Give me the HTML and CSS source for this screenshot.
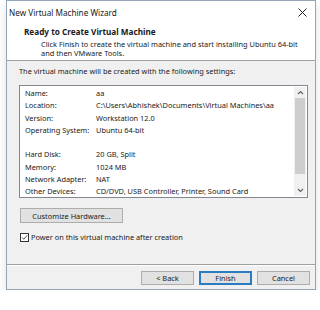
FILE: index.html
```
<!DOCTYPE html>
<html lang="en">
<head>
    <meta charset="UTF-8">
    <title>New Virtual Machine Wizard</title>
    <link rel="stylesheet" href="styles.css">
</head>
<body>
    <div class="window">
        <div class="titlebar">
            <span class="title">New Virtual Machine Wizard</span>
            <svg class="close" width="9" height="9" viewBox="0 0 9 9">
                <path d="M0.5 0.5 L8.5 8.5 M8.5 0.5 L0.5 8.5" stroke="#222" stroke-width="1" fill="none"/>
            </svg>
        </div>

        <!-- Wizard header -->
        <div class="header">
            <div class="header-title">Ready to Create Virtual Machine</div>
            <div class="header-desc">Click Finish to create the virtual machine and start installing Ubuntu 64-bit<br>and then VMware Tools.</div>
        </div>

        <div class="content">
            <p class="intro">The virtual machine will be created with the following settings:</p>
            <div class="listbox">
                <div class="rows">
                    <div class="row"><span class="label">Name:</span><span>aa</span></div>
                    <div class="row"><span class="label">Location:</span><span>C:\Users\Abhishek\Documents\Virtual Machines\aa</span></div>
                    <div class="row"><span class="label">Version:</span><span>Workstation 12.0</span></div>
                    <div class="row"><span class="label">Operating System:</span><span>Ubuntu 64-bit</span></div>
                    <div class="row"></div>
                    <div class="row"><span class="label">Hard Disk:</span><span>20 GB, Split</span></div>
                    <div class="row"><span class="label">Memory:</span><span>1024 MB</span></div>
                    <div class="row"><span class="label">Network Adapter:</span><span>NAT</span></div>
                    <div class="row"><span class="label">Other Devices:</span><span>CD/DVD, USB Controller, Printer, Sound Card</span></div>
                </div>
                <div class="scrollbar">
                    <svg class="arrow" width="7" height="5" viewBox="0 0 7 5"><path d="M1 4 L3.5 1.5 L6 4" stroke="#606060" stroke-width="1.1" fill="none"/></svg>
                    <div class="thumb"></div>
                    <div class="track"></div>
                    <svg class="arrow" width="7" height="5" viewBox="0 0 7 5"><path d="M1 1 L3.5 3.5 L6 1" stroke="#606060" stroke-width="1.1" fill="none"/></svg>
                </div>
            </div>
            <button type="button" class="button customize">Customize Hardware...</button>
            <label class="check">
                <span class="box">
                    <svg width="9" height="9" viewBox="0 0 9 9"><path d="M1.5 4.5 L3.5 6.8 L7.8 1.8" stroke="#222" stroke-width="1" fill="none"/></svg>
                </span>
                Power on this virtual machine after creation
            </label>
        </div>

        <div class="footer">
            <button type="button" class="button">&lt; Back</button>
            <button type="button" class="button default">Finish</button>
            <button type="button" class="button">Cancel</button>
        </div>
    </div>
</body>
</html>
```

FILE: styles.css
```
body {
    margin: 0;
    padding: 0;
    background: #fff;
    font-family: 'Noto Sans', 'Open Sans', sans-serif;
    font-size: 7.4px;
    color: #1a1a1a;
}
.window {
    margin-left: 6px;
    width: 310px;
    height: 290px;
    box-sizing: border-box;
    border: 1px solid #93a5b8;
    background: #f0f0f0;
    display: flex;
    flex-direction: column;
    box-shadow: 0 4px 10px rgba(0, 0, 0, 0.12);
}
.titlebar {
    height: 23px;
    background: #fff;
    display: flex;
    align-items: center;
    justify-content: space-between;
    padding: 0 8px 0 2px;
    font-size: 8.2px;
}
.close {
    display: block;
}
.header {
    height: 36px;
    background: #fff;
    border-bottom: 1px solid #a0a0a0;
    padding-left: 17px;
}
.header-title {
    font-weight: bold;
    font-size: 8.2px;
    line-height: 12px;
    margin-top: 2px;
}
.header-desc {
    padding-left: 17px;
    line-height: 9px;
    margin-top: 2px;
}
.content {
    flex: 1;
    padding: 0 8px 0 12px;
    border-bottom: 1px solid #a0a0a0;
    box-shadow: 0 1px 0 #fff;
}
.intro {
    margin: 5px 0 0;
    line-height: 10px;
}
.listbox {
    margin-top: 9px;
    width: 289px;
    height: 113px;
    box-sizing: border-box;
    border: 1px solid #828790;
    background: #fff;
    display: flex;
}
.rows {
    flex: 1;
    padding: 1px 0 0 5px;
}
.row {
    height: 12.25px;
    line-height: 12.25px;
    display: flex;
    white-space: nowrap;
}
.label {
    width: 71px;
    flex-shrink: 0;
}
.scrollbar {
    width: 12px;
    margin: 1px 1px 1px 0;
    background: #f0f0f0;
    display: flex;
    flex-direction: column;
    align-items: center;
}
.arrow {
    display: block;
    margin: 3px 0;
}
.thumb {
    width: 10px;
    height: 76px;
    background: #cdcdcd;
}
.track {
    flex: 1;
}
.button {
    font-family: inherit;
    font-size: 7.4px;
    color: #1a1a1a;
    background: #e1e1e1;
    border: 1px solid #adadad;
    height: 15px;
    padding: 0;
    margin: 0;
}
.customize {
    display: block;
    margin-top: 10px;
    width: 103px;
    margin-left: 1px;
}
.check {
    display: flex;
    align-items: center;
    margin-top: 9px;
    margin-left: 1px;
    gap: 2px;
}
.box {
    width: 9px;
    height: 9px;
    box-sizing: border-box;
    border: 1px solid #333;
    background: #fff;
    display: flex;
    align-items: center;
    justify-content: center;
}
.box svg {
    display: block;
}
.footer {
    height: 24px;
    display: flex;
    justify-content: flex-end;
    gap: 5px;
    padding: 6px 5px 0 0;
    box-sizing: border-box;
}
.footer .button {
    width: 53px;
    height: 14px;
}
.default {
    border-color: #2b7bc0;
    box-shadow: inset 0 0 0 1px #2b7bc0;
}
```
